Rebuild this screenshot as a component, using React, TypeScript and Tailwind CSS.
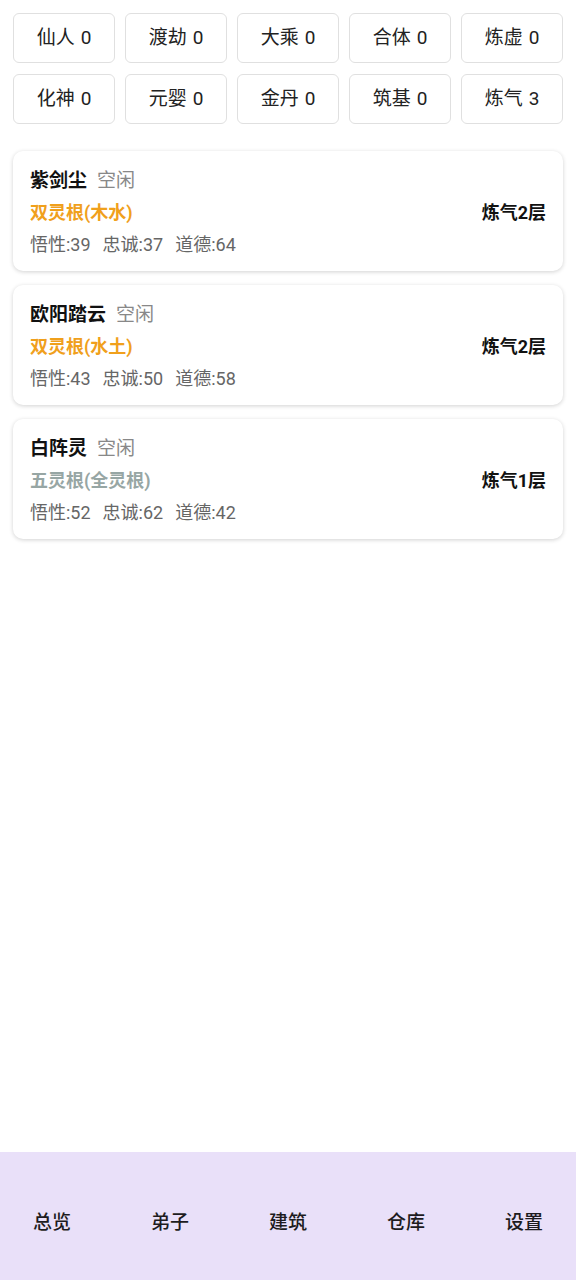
import React from "react";

const realms = [
  { name: "仙人", count: 0 },
  { name: "渡劫", count: 0 },
  { name: "大乘", count: 0 },
  { name: "合体", count: 0 },
  { name: "炼虚", count: 0 },
  { name: "化神", count: 0 },
  { name: "元婴", count: 0 },
  { name: "金丹", count: 0 },
  { name: "筑基", count: 0 },
  { name: "炼气", count: 3 },
];

type Disciple = {
  name: string;
  status: string;
  root: string;
  rootColor: string;
  wisdom: number;
  loyalty: number;
  morality: number;
  level: string;
};

const disciples: Disciple[] = [
  { name: "紫剑尘", status: "空闲", root: "双灵根(木水)", rootColor: "text-[#f0a01c]", wisdom: 39, loyalty: 37, morality: 64, level: "炼气2层" },
  { name: "欧阳踏云", status: "空闲", root: "双灵根(水土)", rootColor: "text-[#f0a01c]", wisdom: 43, loyalty: 50, morality: 58, level: "炼气2层" },
  { name: "白阵灵", status: "空闲", root: "五灵根(全灵根)", rootColor: "text-[#97a6a4]", wisdom: 52, loyalty: 62, morality: 42, level: "炼气1层" },
];

const tabs = ["总览", "弟子", "建筑", "仓库", "设置"];

export default function App() {
  return (
    <div
      className="flex min-h-[1280px] w-full flex-col bg-white text-[#222]"
      style={{ fontFamily: 'Roboto, "Noto Sans CJK SC", sans-serif' }}
    >
      <div className="flex-1 px-[13px] pt-[13px]">
        <div className="grid grid-cols-5 gap-x-[10px] gap-y-[11px]">
          {realms.map((r) => (
            <div
              key={r.name}
              className="flex h-[50px] items-center justify-center gap-[6px] rounded-md border border-[#e0e0e0] bg-white text-[19px] text-[#222]"
            >
              <span>{r.name}</span>
              <span>{r.count}</span>
            </div>
          ))}
        </div>

        <div className="mt-[27px] flex flex-col gap-[14px]">
          {disciples.map((d) => (
            <div
              key={d.name}
              className="flex h-[120px] items-center justify-between rounded-[10px] bg-white px-[17px] pt-[3px] shadow-[0_1px_4px_rgba(0,0,0,0.18)]"
            >
              <div className="flex flex-col leading-8">
                <div className="flex items-baseline gap-[10px]">
                  <span className="text-[19px] font-bold text-[#111]">{d.name}</span>
                  <span className="text-[19px] text-[#888]">{d.status}</span>
                </div>
                <div className={`text-[18px] font-bold ${d.rootColor}`}>{d.root}</div>
                <div className="flex gap-[12px] text-[18px] text-[#666]">
                  <span>悟性:{d.wisdom}</span>
                  <span>忠诚:{d.loyalty}</span>
                  <span>道德:{d.morality}</span>
                </div>
              </div>
              <div className="text-[18px] font-bold text-[#111]">{d.level}</div>
            </div>
          ))}
        </div>
      </div>

      <div className="flex h-[128px] items-center justify-between bg-[#e9e0f9] px-[33px] pt-[14px]">
        {tabs.map((t) => (
          <span key={t} className="text-[19px] font-medium text-[#1d1b20]">
            {t}
          </span>
        ))}
      </div>
    </div>
  );
}
